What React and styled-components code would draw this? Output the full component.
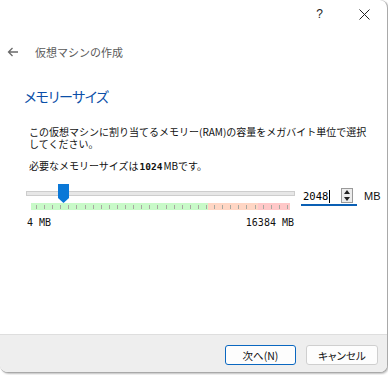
import React from "react";
import styled, { createGlobalStyle } from "styled-components";

const Global = createGlobalStyle`
  html, body { margin: 0; padding: 0; background: #ffffff; }
  body { font-family: "Noto Sans CJK JP", "Noto Sans", sans-serif; }
`;

const Screen = styled.div`
  display: flex;
  width: 391px;
  height: 375px;
  overflow: hidden;
  background: #ffffff;
`;

const Dialog = styled.div`
  width: 388px;
  height: 373px;
  flex: none;
  display: flex;
  flex-direction: column;
  background: #ffffff;
  border-right: 1px solid #a9a9a9;
  border-bottom: 1px solid #a9a9a9;
  border-radius: 0 8px 8px 8px;
  box-shadow: 1px 1px 2px rgba(0, 0, 0, 0.25);
  overflow: hidden;
  box-sizing: border-box;
`;

const Backdrop = styled.div`
  flex: 1;
  background: #ffffff;
`;

const TitleBar = styled.div`
  height: 28px;
  display: flex;
  justify-content: flex-end;
  flex: none;
`;

const CaptionButton = styled.div`
  width: 45px;
  height: 28px;
  display: flex;
  align-items: center;
  justify-content: center;
  font-family: "Liberation Sans", sans-serif;
  font-size: 12px;
  color: #222;
`;

const Header = styled.div`
  height: 48px;
  display: flex;
  align-items: center;
  padding-left: 7px;
  gap: 16px;
  flex: none;
`;

const HeaderTitle = styled.div`
  font-size: 11px;
  color: #5a5a5a;
  line-height: 14px;
`;

const Content = styled.div`
  flex: 1;
  display: flex;
  flex-direction: column;
  padding: 10px 0 0 24px;
`;

const Heading = styled.div`
  font-size: 14px;
  line-height: 20px;
  color: #0b4fa8;
  font-feature-settings: "palt";
  letter-spacing: -0.6px;
`;

const Description = styled.div`
  margin: 20px 0 0 5px;
  font-size: 10px;
  line-height: 12px;
  color: #111;
  width: 345px;
`;

const Requirement = styled.div`
  margin: 10px 0 0 5px;
  font-size: 10px;
  line-height: 12px;
  color: #111;
`;

const Strong = styled.b`
  font-family: "DejaVu Sans Mono", monospace;
  font-size: 9.5px;
  font-weight: bold;
  margin: 0 1px;
`;

const SliderRow = styled.div`
  display: flex;
  align-items: flex-start;
  margin: 10px 0 0 2px;
`;

const SliderColumn = styled.div`
  width: 269px;
  display: flex;
  flex-direction: column;
`;

const TrackArea = styled.div`
  position: relative;
  height: 20px;
  display: flex;
  align-items: center;
`;

const Track = styled.div`
  width: 100%;
  height: 5px;
  margin-top: 1px;
  box-sizing: border-box;
  background: #e7e7e7;
  border: 1px solid #cdcdcd;
`;

const Thumb = styled.svg`
  position: absolute;
  top: 1px;
  width: 11px;
  height: 19px;
`;

const TickStrip = styled.div`
  margin-left: 5px;
  width: 259px;
  height: 7px;
  box-sizing: border-box;
  padding: 0 2px 0 5px;
  display: flex;
  align-items: center;
  justify-content: space-between;
  background: linear-gradient(
    to right,
    #c8fac8 0,
    #c8fac8 177px,
    #ffd6c4 177px,
    #ffd6c4 227px,
    #ffc8c8 227px
  );
`;

const Tick = styled.span`
  width: 1px;
  height: 4px;
  background: #a8a8a0;
`;

const RangeLabels = styled.div`
  display: flex;
  justify-content: space-between;
  margin-top: 7px;
  padding: 0 1px 0 1px;
  font-family: "DejaVu Sans Mono", monospace;
  font-size: 10px;
  line-height: 12px;
  color: #111;
`;

const SpinBox = styled.div`
  margin: 5px 0 0 6px;
  width: 56px;
  height: 18px;
  box-sizing: border-box;
  display: flex;
  align-items: center;
  border-bottom: 2px solid #0a5fb4;
  background: #fff;
`;

const SpinText = styled.div`
  flex: 1;
  padding-left: 2px;
  display: flex;
  align-items: center;
  font-family: "DejaVu Sans Mono", monospace;
  font-size: 10.5px;
  line-height: 14px;
  color: #000;
`;

const Caret = styled.span`
  width: 1px;
  height: 13px;
  background: #000;
  margin-left: 1px;
`;

const SpinButtons = styled.div`
  width: 12px;
  height: 15px;
  margin-right: 4px;
  margin-bottom: 1px;
  box-sizing: border-box;
  border: 1px solid #9a9a9a;
  background: #ececec;
  display: flex;
  flex-direction: column;
  align-items: center;
  justify-content: space-around;
`;

const Unit = styled.div`
  margin: 6px 0 0 7px;
  font-family: "Liberation Sans", sans-serif;
  font-size: 11px;
  line-height: 14px;
  color: #111;
`;

const Footer = styled.div`
  height: 38px;
  flex: none;
  display: flex;
  justify-content: flex-end;
  align-items: flex-start;
  gap: 10px;
  padding: 10px 9px 0 0;
  box-sizing: border-box;
  background: #eeeeee;
  border-top: 1px solid #dedede;
`;

const Button = styled.div`
  width: ${(p) => (p.$primary ? "71px" : "72px")};
  height: 20px;
  box-sizing: border-box;
  display: flex;
  align-items: center;
  justify-content: center;
  border-radius: 3px;
  border: 1px solid ${(p) => (p.$primary ? "#0a67c0" : "#cfcfcf")};
  background: #fdfdfd;
  font-size: 10.5px;
  color: #111;
  font-feature-settings: "palt";
`;

const ticks = Array.from({ length: 32 });

export default function App() {
  const value = 2048;
  const thumbLeft = Math.round(5 + ((value - 4) / (16384 - 4)) * 216);
  return (
    <>
      <Global />
      <Screen>
        <Dialog>
          <TitleBar>
            <CaptionButton>?</CaptionButton>
            <CaptionButton>
              <svg width="11" height="11" viewBox="0 0 11 11">
                <path d="M0.5 0.5 L10.5 10.5 M10.5 0.5 L0.5 10.5" stroke="#222" strokeWidth="1" fill="none" />
              </svg>
            </CaptionButton>
          </TitleBar>
          <Header>
            <svg width="12" height="10" viewBox="0 0 12 10">
              <path d="M11 5 H1.5 M5.5 1 L1.5 5 L5.5 9" stroke="#6a6a6a" strokeWidth="1.3" fill="none" />
            </svg>
            <HeaderTitle>仮想マシンの作成</HeaderTitle>
          </Header>
          <Content>
            <Heading>メモリーサイズ</Heading>
            <Description>
              この仮想マシンに割り当てるメモリー(RAM)の容量をメガバイト単位で選択してください。
            </Description>
            <Requirement>
              必要なメモリーサイズは<Strong>1024</Strong>MBです。
            </Requirement>
            <SliderRow>
              <SliderColumn>
                <TrackArea>
                  <Track />
                  <Thumb viewBox="0 0 11 19" style={{ left: thumbLeft }}>
                    <path d="M0 0 H11 V14 L5.5 19 L0 14 Z" fill="#0a78d7" />
                  </Thumb>
                </TrackArea>
                <TickStrip>
                  {ticks.map((_, i) => (
                    <Tick key={i} />
                  ))}
                </TickStrip>
                <RangeLabels>
                  <span>4 MB</span>
                  <span>16384 MB</span>
                </RangeLabels>
              </SliderColumn>
              <SpinBox>
                <SpinText>
                  2048
                  <Caret />
                </SpinText>
                <SpinButtons>
                  <svg width="6" height="4" viewBox="0 0 6 4">
                    <path d="M3 0 L6 4 H0 Z" fill="#222" />
                  </svg>
                  <svg width="6" height="4" viewBox="0 0 6 4">
                    <path d="M0 0 H6 L3 4 Z" fill="#222" />
                  </svg>
                </SpinButtons>
              </SpinBox>
              <Unit>MB</Unit>
            </SliderRow>
          </Content>
          <Footer>
            <Button $primary>次へ(N)</Button>
            <Button>キャンセル</Button>
          </Footer>
        </Dialog>
        <Backdrop />
      </Screen>
    </>
  );
}
